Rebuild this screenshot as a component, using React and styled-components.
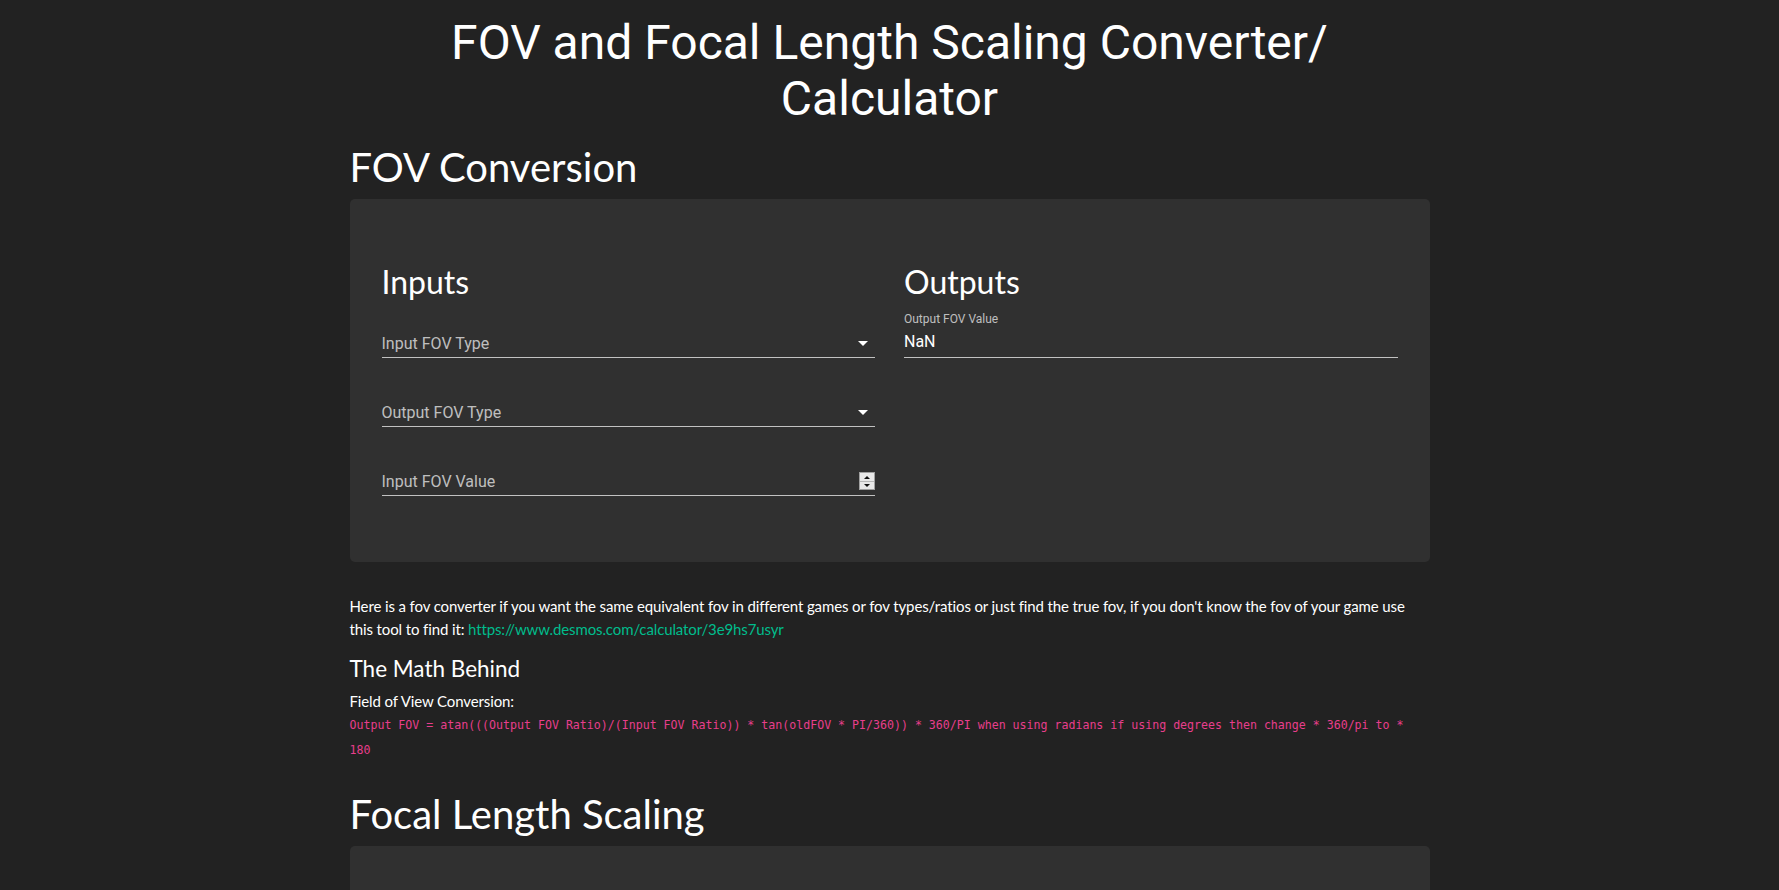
import React from 'react';
import styled, { createGlobalStyle } from 'styled-components';

const GlobalStyle = createGlobalStyle`
  body {
    margin: 0;
    background: #222222;
    color: #ffffff;
    font-family: Lato, "Noto Sans", sans-serif;
    font-size: 15px;
    line-height: 1.5;
  }
`;

const Page = styled.main`
  width: 1080px;
  margin: 0 auto;
  padding-bottom: 40px;
`;

const PageTitle = styled.h1`
  margin: 15px 0 16px;
  font-family: Roboto, "Liberation Sans", sans-serif;
  font-size: 48px;
  font-weight: 400;
  line-height: 1.167;
  text-align: center;
`;

const SectionTitle = styled.h2`
  margin: ${(p) => p.$gap || 0}px 0 8px;
  font-size: 40px;
  font-weight: 400;
  line-height: 1.2;
`;

const Card = styled.section`
  display: grid;
  grid-template-columns: 1fr 1fr;
  column-gap: 29px;
  min-height: ${(p) => p.$minHeight || 0}px;
  margin-bottom: 33px;
  padding: 64px 32px 66px;
  background: #303030;
  border-radius: 5px;
  box-sizing: border-box;
`;

const Column = styled.div`
  display: flex;
  flex-direction: column;
  gap: 21px;
`;

const ColumnTitle = styled.h3`
  margin: 0 0 -12px;
  font-size: 32px;
  font-weight: 400;
  line-height: 1.2;
`;

const Field = styled.div`
  display: flex;
  flex-direction: column;
  padding-top: 16px;
  font-family: Roboto, "Liberation Sans", sans-serif;
`;

const SmallLabel = styled.label`
  margin-top: -16px;
  height: 16px;
  font-size: 12px;
  line-height: 18px;
  color: rgba(255, 255, 255, 0.7);
`;

const InputLine = styled.div`
  display: flex;
  align-items: flex-start;
  justify-content: space-between;
  padding: ${(p) => (p.$filled ? '4px 0 4px' : '6px 0 2px')};
  border-bottom: 1px solid rgba(255, 255, 255, 0.7);
  font-size: 16px;
  line-height: 23px;
  color: ${(p) => (p.$filled ? '#ffffff' : 'rgba(255, 255, 255, 0.7)')};
`;

const DropIcon = styled.svg`
  width: 24px;
  height: 24px;
  margin-top: -1px;
  fill: #ffffff;
  flex-shrink: 0;
`;

const Spinner = styled.span`
  display: flex;
  flex-direction: column;
  width: 14px;
  height: 16px;
  margin-top: 2px;
  border: 1px solid #a0a0a0;
  background: #e9e9e9;
`;

const SpinHalf = styled.span`
  flex: 1;
  display: flex;
  align-items: center;
  justify-content: center;
  border-top: ${(p) => (p.$down ? '1px solid #b8b8b8' : 'none')};

  &::after {
    content: '';
    border-left: 3px solid transparent;
    border-right: 3px solid transparent;
    ${(p) =>
      p.$down ? 'border-top: 3px solid #111;' : 'border-bottom: 3px solid #111;'}
  }
`;

const Text = styled.p`
  margin: 0 0 ${(p) => (p.$tight ? 0 : 15)}px;
  letter-spacing: -0.12px;
`;

const Link = styled.a`
  color: #00bc8c;
  text-decoration: none;
`;

const SubTitle = styled.h4`
  margin: 0 0 8px;
  font-size: 22.5px;
  font-weight: 400;
  line-height: 1.2;
`;

const Code = styled.code`
  display: block;
  margin: 0 0 15px;
  font-family: "DejaVu Sans Mono", "Liberation Mono", monospace;
  font-size: 11.6px;
  line-height: 25px;
  color: #e83e8c;
  word-wrap: break-word;
`;

const ArrowDown = () => (
  <DropIcon viewBox="0 0 24 24">
    <path d="M7 10l5 5 5-5z" />
  </DropIcon>
);

const SelectField = ({ label }) => (
  <Field>
    <InputLine>
      <span>{label}</span>
      <ArrowDown />
    </InputLine>
  </Field>
);

const NumberField = ({ label }) => (
  <Field>
    <InputLine>
      <span>{label}</span>
      <Spinner>
        <SpinHalf />
        <SpinHalf $down />
      </Spinner>
    </InputLine>
  </Field>
);

const OutputField = ({ label, value }) => (
  <Field>
    <SmallLabel>{label}</SmallLabel>
    <InputLine $filled>
      <span>{value}</span>
    </InputLine>
  </Field>
);

const App = () => {
  return (
    <>
      <GlobalStyle />
      <Page>
        <PageTitle>FOV and Focal Length Scaling Converter/ Calculator</PageTitle>

        <SectionTitle>FOV Conversion</SectionTitle>
        <Card>
          <Column>
            <ColumnTitle>Inputs</ColumnTitle>
            <SelectField label="Input FOV Type" />
            <SelectField label="Output FOV Type" />
            <NumberField label="Input FOV Value" />
          </Column>
          <Column>
            <ColumnTitle>Outputs</ColumnTitle>
            <OutputField label="Output FOV Value" value="NaN" />
          </Column>
        </Card>

        <Text>
          Here is a fov converter if you want the same equivalent fov in different games or fov
          types/ratios or just find the true fov, if you don't know the fov of your game use this
          tool to find it:{' '}
          <Link href="#">https://www.desmos.com/calculator/3e9hs7usyr</Link>
        </Text>
        <SubTitle>The Math Behind</SubTitle>
        <Text $tight>Field of View Conversion:</Text>
        <Code>
          Output FOV = atan(((Output FOV Ratio)/(Input FOV Ratio)) * tan(oldFOV * PI/360)) * 360/PI
          when using radians if using degrees then change * 360/pi to * 180
        </Code>

        <SectionTitle $gap={27}>Focal Length Scaling</SectionTitle>
        <Card $minHeight={300} />
      </Page>
    </>
  );
};

export default App;
